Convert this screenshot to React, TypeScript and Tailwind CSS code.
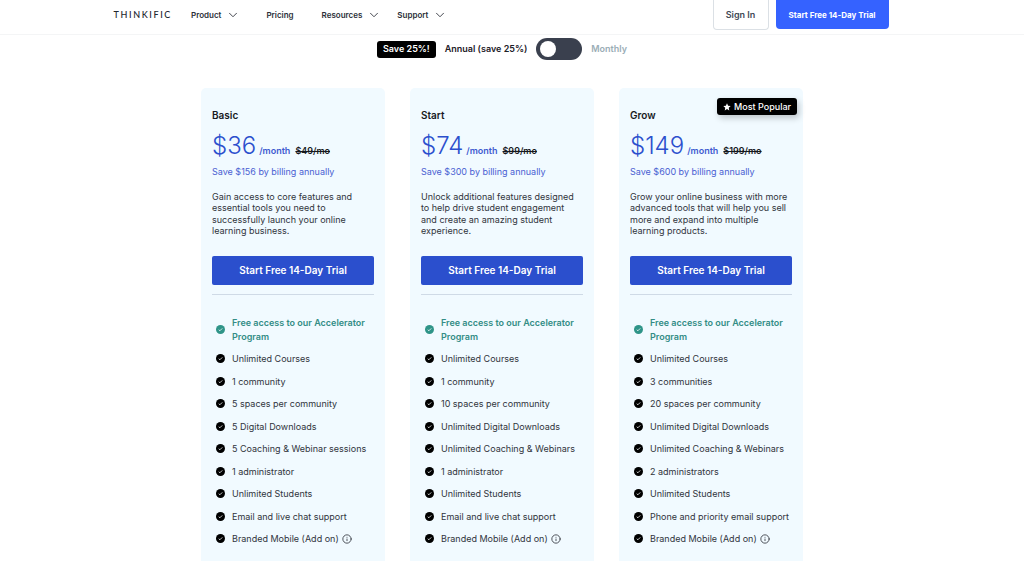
import { ChevronDown, Info } from "lucide-react";
import { useState } from "react";

type Plan = {
  name: string;
  price: string;
  was: string;
  saving: string;
  description: string;
  popular?: boolean;
  features: string[];
};

const plans: Plan[] = [
  {
    name: "Basic",
    price: "$36",
    was: "$49/mo",
    saving: "Save $156 by billing annually",
    description:
      "Gain access to core features and essential tools you need to successfully launch your online learning business.",
    features: [
      "Unlimited Courses",
      "1 community",
      "5 spaces per community",
      "5 Digital Downloads",
      "5 Coaching & Webinar sessions",
      "1 administrator",
      "Unlimited Students",
      "Email and live chat support",
    ],
  },
  {
    name: "Start",
    price: "$74",
    was: "$99/mo",
    saving: "Save $300 by billing annually",
    description:
      "Unlock additional features designed to help drive student engagement and create an amazing student experience.",
    features: [
      "Unlimited Courses",
      "1 community",
      "10 spaces per community",
      "Unlimited Digital Downloads",
      "Unlimited Coaching & Webinars",
      "1 administrator",
      "Unlimited Students",
      "Email and live chat support",
    ],
  },
  {
    name: "Grow",
    price: "$149",
    was: "$199/mo",
    saving: "Save $600 by billing annually",
    description:
      "Grow your online business with more advanced tools that will help you sell more and expand into multiple learning products.",
    popular: true,
    features: [
      "Unlimited Courses",
      "3 communities",
      "20 spaces per community",
      "Unlimited Digital Downloads",
      "Unlimited Coaching & Webinars",
      "2 administrators",
      "Unlimited Students",
      "Phone and priority email support",
    ],
  },
];

function CheckBadge({ className }: { className: string }) {
  return (
    <svg viewBox="0 0 18 18" className={`size-[9px] shrink-0 ${className}`} aria-hidden>
      <circle cx="9" cy="9" r="9" fill="currentColor" />
      <path d="M5.500 9.500l2.300 2 4.700-4.700" fill="none" stroke="#fff" strokeWidth="1.600" />
    </svg>
  );
}

function Star() {
  return (
    <svg viewBox="0 0 24 24" className="size-2 shrink-0" aria-hidden>
      <path
        d="M12 1l3.300 7.200 7.700.9-5.700 5.300 1.500 7.800L12 18.300l-6.800 3.900 1.500-7.800L1 9.100l7.700-.9z"
        fill="currentColor"
      />
    </svg>
  );
}

function NavMenu({ label }: { label: string }) {
  return (
    <button type="button" className="flex items-center gap-[5px]">
      {label}
      <ChevronDown className="size-[14px]" strokeWidth={1.5} aria-hidden />
    </button>
  );
}

function Header() {
  return (
    <header className="border-b border-[#f4f5f6] pr-[22px]">
      <div className="mx-auto flex h-[34px] max-w-[775px] items-start justify-between">
        <div className="flex h-[30px] items-center text-[8px] font-semibold text-[#2b2f38]">
          <a
            href="#"
            className="mr-[19px] font-['Lato',sans-serif] text-[9px] font-medium tracking-[0.18em] text-[#22262e]"
          >
            THINKIFIC
          </a>
          <nav className="flex items-center">
            <NavMenu label="Product" />
            <a href="#pricing" className="mr-7 ml-[26px]">
              Pricing
            </a>
            <NavMenu label="Resources" />
            <span className="ml-4 flex">
              <NavMenu label="Support" />
            </span>
          </nav>
        </div>
        <div className="flex items-start gap-[7px]">
          <a
            href="#sign-in"
            className="flex h-[30px] w-14 items-center justify-center rounded-b-[4px] border border-t-0 border-[#dbe0e5] text-[9px] font-semibold text-[#424955]"
          >
            Sign In
          </a>
          <a
            href="#trial"
            className="flex h-[29px] w-[113px] items-center justify-center rounded-b-[4px] bg-[#3562ff] text-[8px] font-bold text-white"
          >
            Start Free 14-Day Trial
          </a>
        </div>
      </div>
    </header>
  );
}

function BillingToggle() {
  const [monthly, setMonthly] = useState(false);

  return (
    <div className="mt-[3px] flex items-center justify-center gap-[9px] text-[9px] font-semibold text-[#1d2027]">
      <span className="flex h-[17px] items-center rounded-[3px] bg-black px-[6px] text-white">
        Save 25%!
      </span>
      <span>Annual (save 25%)</span>
      <label className="relative flex h-[22px] w-[46px] cursor-pointer items-center rounded-full bg-[#3a404e] px-1">
        <input
          type="checkbox"
          role="switch"
          aria-label="Monthly billing"
          checked={monthly}
          onChange={(e) => setMonthly(e.target.checked)}
          className="peer absolute inset-0 cursor-pointer appearance-none rounded-full"
        />
        <span className="pointer-events-none size-4 rounded-full bg-white transition-transform peer-checked:translate-x-[22px]" />
      </label>
      <span className="text-[#9aadb6]">Monthly</span>
    </div>
  );
}

function PlanCard({ plan }: { plan: Plan }) {
  return (
    <article className="relative rounded-[5px] bg-[#f1faff] px-[11px] pt-5 pb-8">
      {plan.popular ? (
        <span className="absolute top-[10px] right-[6px] flex h-[17px] items-center gap-[3px] rounded-[3px] bg-black px-[6px] text-[9px] font-medium text-white shadow-[2px_3px_6px_rgba(0,0,0,0.22)]">
          <Star />
          Most Popular
        </span>
      ) : null}
      <h2 className="text-[10px] leading-[14px] font-semibold text-[#17191e]">{plan.name}</h2>
      <p className="mt-2 flex items-baseline text-[9px] leading-3 font-semibold">
        <span className="text-[24px] leading-8 font-light text-[#2b4fcd]">{plan.price}</span>
        <span className="ml-[3px] text-[#3f5bd0]">/month</span>
        <s className="ml-[5px] text-[#17191e]">{plan.was}</s>
      </p>
      <p className="mt-1 text-[9px] leading-3 text-[#4a61d2]">{plan.saving}</p>
      <p className="mt-[13px] min-h-[45px] pr-0.5 text-[9px] leading-tight text-[#30343c]">
        {plan.description}
      </p>
      <a
        href="#trial"
        className="mt-5 flex h-[29px] items-center justify-center rounded-[2px] bg-[#2b4fcd] text-[10px] font-semibold text-white"
      >
        Start Free 14-Day Trial
      </a>
      <hr className="mt-[9px] border-[#cfdae6]" />
      <ul className="mt-[21px] flex flex-col gap-[9px] pl-1 text-[9px] leading-normal text-[#30343c]">
        <li className="flex items-center gap-[7px] font-semibold text-[#338d86]">
          <CheckBadge className="text-[#2f9488]" />
          Free access to our Accelerator Program
        </li>
        {plan.features.map((feature) => (
          <li key={feature} className="flex items-center gap-[7px]">
            <CheckBadge className="text-black" />
            {feature}
          </li>
        ))}
        <li className="flex items-center gap-[7px]">
          <CheckBadge className="text-black" />
          <span className="flex items-center gap-[3px]">
            Branded Mobile (Add on)
            <Info className="size-[10px]" strokeWidth={2} aria-hidden />
          </span>
        </li>
      </ul>
    </article>
  );
}

export default function App() {
  return (
    <div className="h-screen overflow-hidden bg-white font-['Inter',sans-serif]">
      <Header />
      <main className="pr-5">
        <BillingToggle />
        <div
          id="pricing"
          className="mx-auto mt-7 grid max-w-[602px] grid-cols-3 gap-[25px]"
        >
          {plans.map((plan) => (
            <PlanCard key={plan.name} plan={plan} />
          ))}
        </div>
      </main>
    </div>
  );
}
